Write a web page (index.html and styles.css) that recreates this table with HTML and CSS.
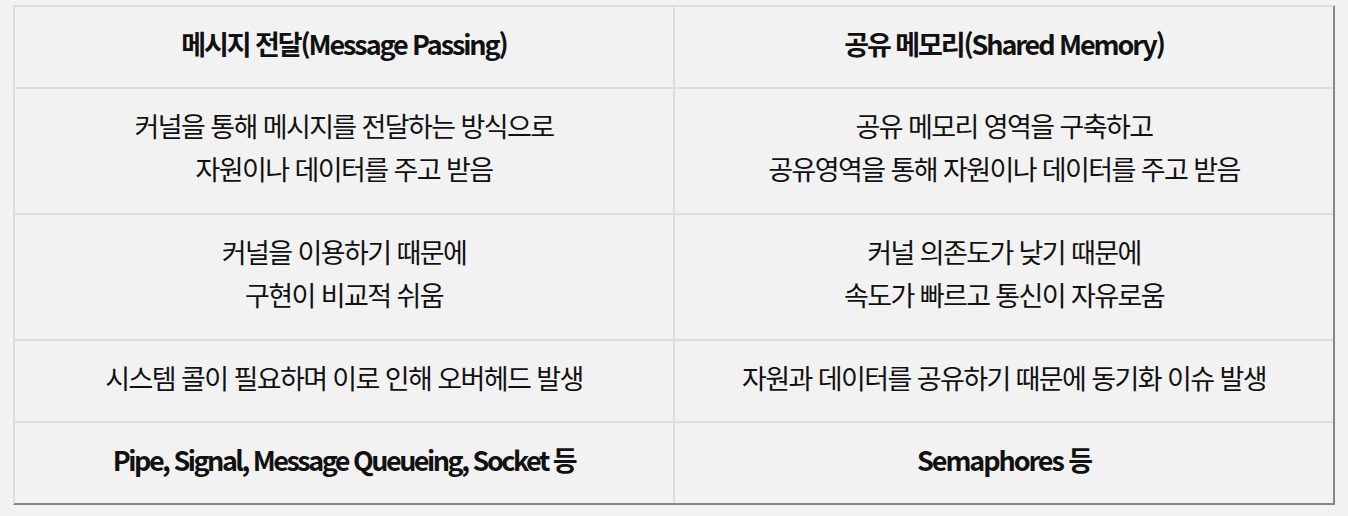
FILE: index.html
```html
<!DOCTYPE html>
<html lang="ko">
<head>
<meta charset="utf-8">
<link rel="stylesheet" href="styles.css">
</head>
<body>
<div class="table">
  <div class="cell head">메시지 전달(Message Passing)</div>
  <div class="cell head">공유 메모리(Shared Memory)</div>
  <div class="cell">커널을 통해 메시지를 전달하는 방식으로<br>자원이나 데이터를 주고 받음</div>
  <div class="cell">공유 메모리 영역을 구축하고<br>공유영역을 통해 자원이나 데이터를 주고 받음</div>
  <div class="cell">커널을 이용하기 때문에<br>구현이 비교적 쉬움</div>
  <div class="cell">커널 의존도가 낮기 때문에<br>속도가 빠르고 통신이 자유로움</div>
  <div class="cell">시스템 콜이 필요하며 이로 인해 오버헤드 발생</div>
  <div class="cell">자원과 데이터를 공유하기 때문에 동기화 이슈 발생</div>
  <div class="cell head tight">Pipe, Signal, Message Queueing, Socket 등</div>
  <div class="cell head">Semaphores 등</div>
</div>
</body>
</html>
```
FILE: styles.css
```css
html, body {
  margin: 0;
  background: #f2f2f2;
}
body {
  padding: 5px 0 0 13px;
  font-family: "Noto Sans CJK KR", "Noto Sans", sans-serif;
  color: #111;
}
.table {
  display: grid;
  grid-template-columns: 658px 658px;
  grid-template-rows: 80px 124px 124px 80px 80px;
  gap: 2px;
  width: 1318px;
  background: #dddddd;
  border-style: solid;
  border-width: 2px;
  border-color: #dddddd #888888 #888888 #dddddd;
}
.cell {
  background: #f2f2f2;
  display: flex;
  align-items: center;
  justify-content: center;
  text-align: center;
  padding-bottom: 8px;
  font-size: 27px;
  line-height: 43px;
  letter-spacing: -1.6px;
}
.head {
  font-weight: 600;
  letter-spacing: -2.1px;
}
.head.tight {
  letter-spacing: -2.5px;
}
```
